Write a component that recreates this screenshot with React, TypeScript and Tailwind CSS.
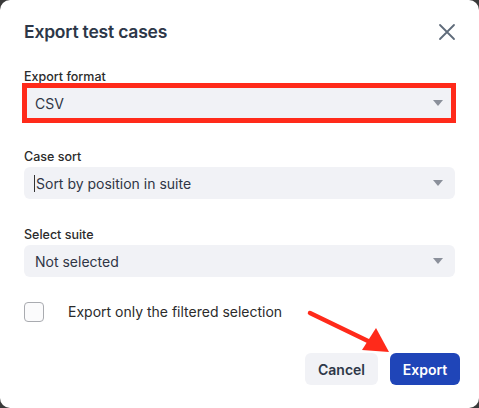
import React from "react";

const font = { fontFamily: "Inter, 'Noto Sans', sans-serif" };

function Caret() {
  return (
    <svg width="10" height="6" viewBox="0 0 10 6" className="shrink-0">
      <path d="M0 0 L10 0 L5 6 Z" fill="#8b909b" />
    </svg>
  );
}

function Select({ value, cursor = false }: { value: string; cursor?: boolean }) {
  return (
    <div className="flex h-[32px] w-full items-center justify-between rounded-[6px] bg-[#f1f2f6] pl-[11px] pr-[12px]">
      <span className="flex items-center text-[14px] text-[#2f3545]">
        {cursor && <span className="mr-[1px] ml-[-1px] inline-block h-[17px] w-px bg-[#333]" />}
        {value}
      </span>
      <Caret />
    </div>
  );
}

function Field({ label, children }: { label: string; children: React.ReactNode }) {
  return (
    <div>
      <div className="h-[20px] text-[12.5px] font-medium leading-[21px] text-[#2b2b2b]">{label}</div>
      <div className="mt-[1px]">{children}</div>
    </div>
  );
}

export default function App() {
  return (
    <div className="h-[408px] w-[479px] bg-[#3a3a3a]" style={font}>
      <div className="relative h-full w-full rounded-[10px] bg-white px-6 pt-[18px]">
        {/* header */}
        <div className="flex h-7 items-center justify-between">
          <h2 className="text-[17.5px] font-semibold tracking-[-0.2px] text-[#2d3748]">Export test cases</h2>
          <svg width="18" height="18" viewBox="0 0 18 18" className="mr-[-1px]">
            <path d="M2 2 L16 16 M16 2 L2 16" stroke="#5f6b7a" strokeWidth="1.8" strokeLinecap="round" />
          </svg>
        </div>

        <div className="mt-[20px]">
          <Field label="Export format">
            <div className="relative">
              <Select value="CSV" />
              {/* annotation box */}
              <div className="pointer-events-none absolute -bottom-[4px] -left-[2px] -right-[1px] -top-[4px] border-[5px] border-[#ff2a1a]" />
            </div>
          </Field>
        </div>

        <div className="mt-[27px]">
          <Field label="Case sort">
            <Select value="Sort by position in suite" cursor />
          </Field>
        </div>

        <div className="mt-[25px]">
          <Field label="Select suite">
            <Select value="Not selected" />
          </Field>
        </div>

        <div className="mt-[24px] flex items-center">
          <div className="h-[20px] w-[20px] rounded-[4px] border border-[#a9abb0] bg-[#fbfbfc]" />
          <span className="ml-[24px] text-[14px] text-[#2b2b2b]">Export only the filtered selection</span>
        </div>

        <div className="mr-[-5px] mt-[31px] flex justify-end gap-3">
          <button className="h-[32px] w-[73px] rounded-[6px] bg-[#f1f2f6] text-[14px] font-semibold text-[#2d3748]">
            Cancel
          </button>
          <button className="h-[32px] w-[70px] rounded-[6px] bg-[#1f45b8] text-[14px] font-semibold text-white">
            Export
          </button>
        </div>

        {/* annotation arrow */}
        <svg className="pointer-events-none absolute left-0 top-0" width="479" height="408" viewBox="0 0 479 408">
          <line x1="310" y1="313" x2="368" y2="341" stroke="#ff2a1a" strokeWidth="4.5" strokeLinecap="round" />
          <polygon points="389,352 362,350 376,328" fill="#ff2a1a" />
        </svg>
      </div>
    </div>
  );
}
